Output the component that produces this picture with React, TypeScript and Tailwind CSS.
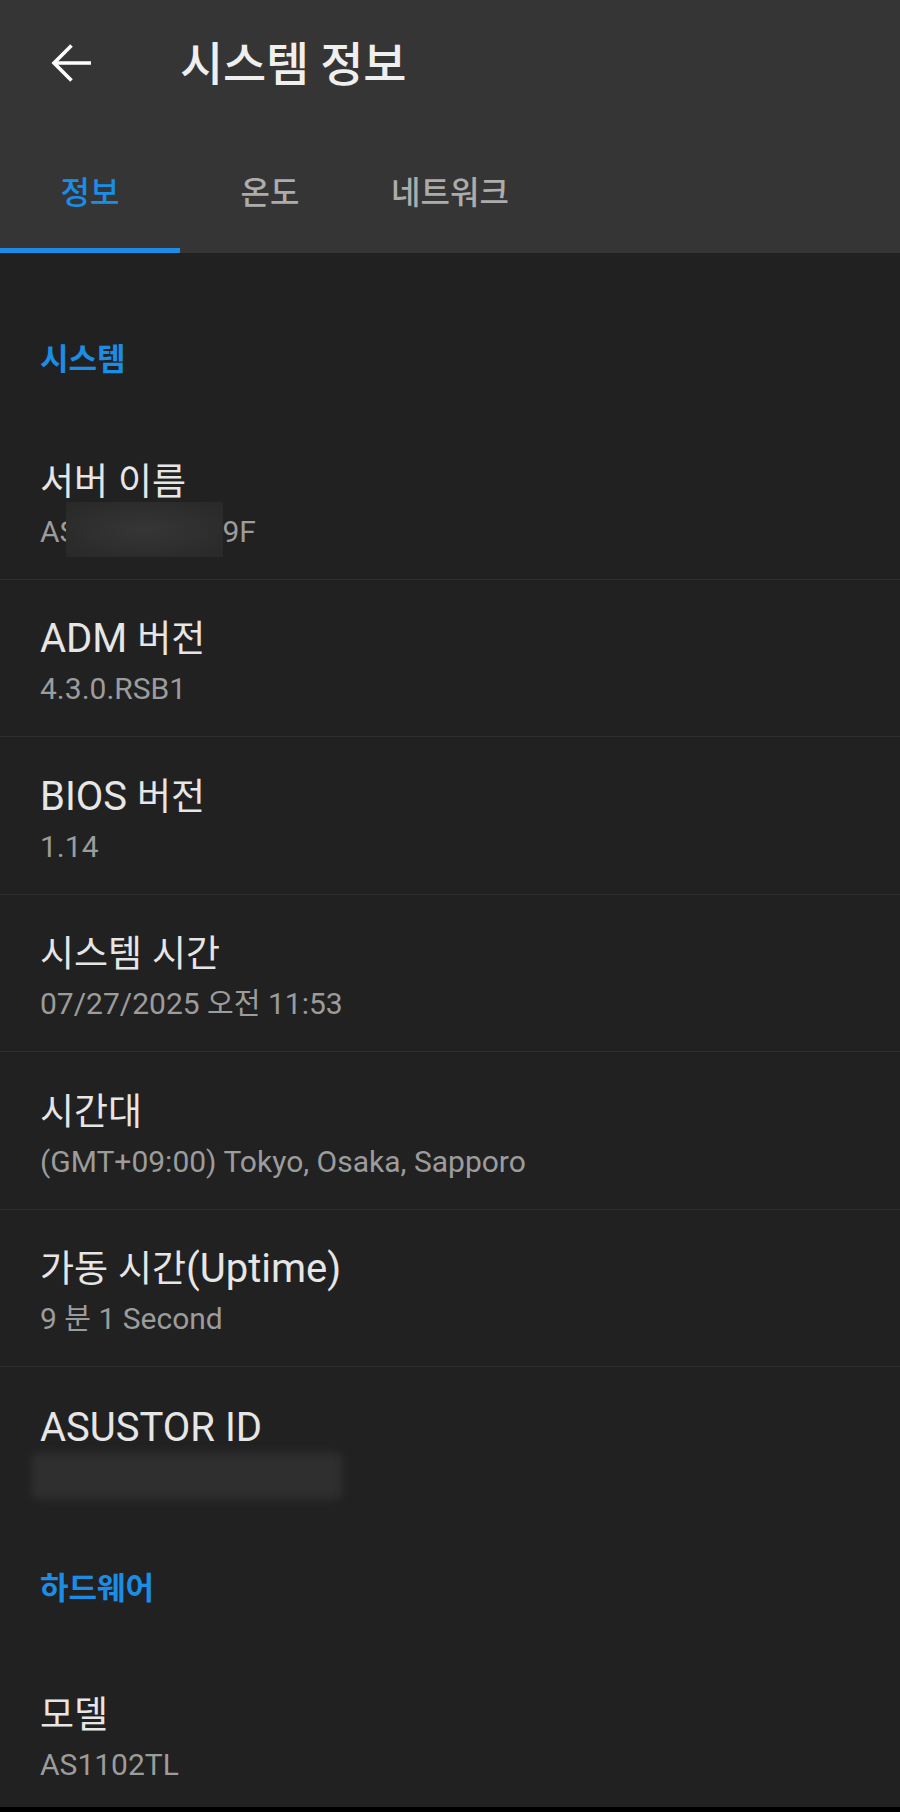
import React from 'react';

type InfoRow = {
  label: string;
  value?: string;
  masked?: 'server' | 'id';
  last?: boolean;
};

const BackIcon: React.FC<{ className?: string }> = (props) => (
  <svg viewBox="0 0 40 40" fill="none" stroke="currentColor" strokeWidth={3.6} {...props}>
    <path d="M40 20H3" />
    <path d="M20.5 2.5L3 20l17.5 17.5" />
  </svg>
);

const systemRows: InfoRow[] = [
  { label: '서버 이름', masked: 'server' },
  { label: 'ADM 버전', value: '4.3.0.RSB1' },
  { label: 'BIOS 버전', value: '1.14' },
  { label: '시스템 시간', value: '07/27/2025 오전 11:53' },
  { label: '시간대', value: '(GMT+09:00) Tokyo, Osaka, Sapporo' },
  { label: '가동 시간(Uptime)', value: '9 분 1 Second' },
  { label: 'ASUSTOR ID', masked: 'id', last: true },
];

const hardwareRows: InfoRow[] = [{ label: '모델', value: 'AS1102TL', last: true }];

const font = "font-['Roboto','Noto_Sans_CJK_KR',sans-serif]";

// hangul runs are drawn a bit smaller than latin ones, as the device font does
const Mixed: React.FC<{ text: string; latin: string; hangul: string }> = ({ text, latin, hangul }) => (
  <>
    {text
      .split(/([\uAC00-\uD7A3]+)/)
      .filter((part) => part.length > 0)
      .map((part, i) => (
        <span key={i} className={/[\uAC00-\uD7A3]/.test(part) ? hangul : latin}>
          {part}
        </span>
      ))}
  </>
);

const Row: React.FC<{ row: InfoRow }> = ({ row }) => {
  const renderValue = () => {
    if (row.masked === 'server') {
      return (
        <div className="relative text-[30px] leading-[36px] text-[#9c9c9c]">
          <span>AS</span>
          <span className="inline-block w-[145px]" />
          <span>9F</span>
          <div className="absolute left-[26px] top-[-12px] h-[55px] w-[157px] bg-[radial-gradient(ellipse_at_center,#363636_0%,#2c2c2c_70%,#292929_100%)]" />
        </div>
      );
    }
    if (row.masked === 'id') {
      return (
        <div className="relative text-[30px] leading-[36px] text-[#9c9c9c]">
          <span>&nbsp;</span>
          <div className="absolute left-[-8px] top-[-6px] h-[46px] w-[310px] rounded-sm bg-[#2f2f2f] blur-[4px]" />
        </div>
      );
    }
    return (
      <div className="text-[30px] leading-[36px] text-[#9c9c9c]">
        <Mixed text={row.value ?? ''} latin="" hangul="text-[29px]" />
      </div>
    );
  };

  return (
    <div
      className={`h-[157.5px] flex flex-col justify-center gap-[8px] px-[40px] pt-[8px] ${
        row.last ? '' : 'border-b border-[#2f2f2f]'
      }`}
    >
      <div className="text-[40px] leading-[46px] text-[#e6e6e6]">
        <Mixed text={row.label} latin="" hangul="text-[37px]" />
      </div>
      {renderValue()}
    </div>
  );
};

const SectionHeader: React.FC<{ title: string; first?: boolean }> = ({ title, first }) => (
  <div
    className={`flex items-center px-[40px] text-[31px] font-bold text-[#1b8de4] ${
      first ? 'h-[127px] pt-[4px]' : 'h-[130px]'
    }`}
  >
    {title}
  </div>
);

export default function App() {
  const tabs = ['정보', '온도', '네트워크'];

  return (
    <div className={`w-[900px] h-[1812px] flex flex-col overflow-hidden bg-[#212121] ${font}`}>
      {/* Toolbar + tabs */}
      <header className="bg-[#353535] shrink-0">
        <div className="h-[126px] flex items-center">
          <div className="w-[141px] flex justify-end pr-[50px]">
            <BackIcon className="h-[40px] w-[40px] text-white" />
          </div>
          <h1 className="ml-[39px] pt-[5px] text-[47px] font-medium text-[#efefef] tracking-[-0.3px]">시스템 정보</h1>
        </div>
        <div className="h-[127px] flex">
          {tabs.map((tab, i) => (
            <div key={tab} className="w-[180px] flex flex-col">
              <div
                className={`flex-1 flex items-center justify-center pt-[12px] text-[32px] font-medium ${
                  i === 0 ? 'text-[#1b8de4]' : 'text-[#acacac]'
                }`}
              >
                {tab}
              </div>
              <div className={`h-[5px] ${i === 0 ? 'bg-[#1b8de4]' : ''}`} />
            </div>
          ))}
        </div>
      </header>

      {/* Content */}
      <main className="flex-1 overflow-hidden pt-[42px]">
        <SectionHeader title="시스템" first />
        {systemRows.map((row) => (
          <Row key={row.label} row={row} />
        ))}
        <SectionHeader title="하드웨어" />
        {hardwareRows.map((row) => (
          <Row key={row.label} row={row} />
        ))}
      </main>

      <div className="h-[5px] bg-black shrink-0" />
    </div>
  );
}
